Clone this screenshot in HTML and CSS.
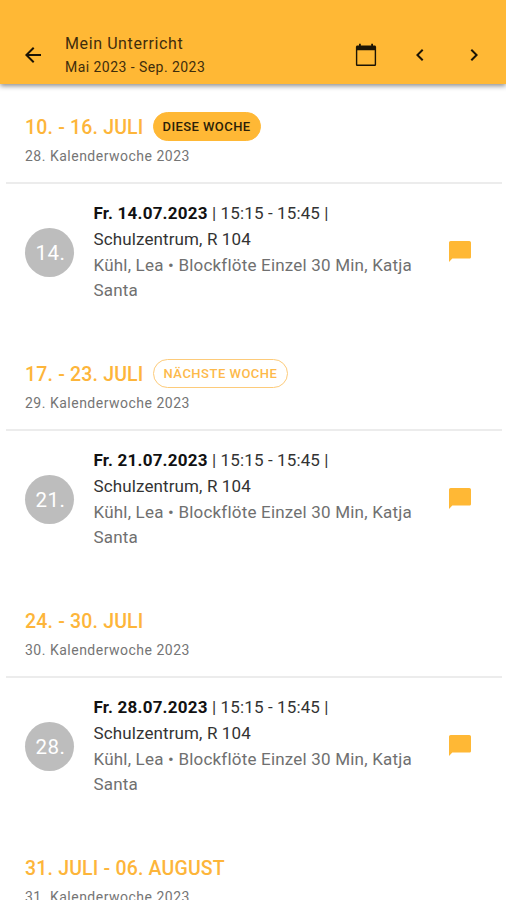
FILE: index.html
```html
<!DOCTYPE html>
<html lang="de">
<head>
    <meta charset="UTF-8">
    <meta name="viewport" content="width=device-width, initial-scale=1.0">
    <title>Mein Unterricht</title>
    <link rel="stylesheet" href="styles.css">
</head>
<body>
    <header class="toolbar">
        <svg class="icon back" viewBox="0 0 24 24"><path d="M20 11H7.83l5.59-5.59L12 4l-8 8 8 8 1.41-1.41L7.83 13H20z"/></svg>
        <div class="titles">
            <div class="title">Mein Unterricht</div>
            <div class="subtitle">Mai 2023 - Sep. 2023</div>
        </div>
        <svg class="icon calendar" viewBox="0 0 24 24"><path d="M20.500 2.500H19V.8h-1.800v1.700H6.800V.8H5v1.700H3.500c-.9 0-1.600.7-1.600 1.600v17.300c0 .9.700 1.600 1.600 1.600h17c.9 0 1.600-.7 1.600-1.600V4.100c0-.9-.7-1.600-1.600-1.600zm.2 19.100H3.300V7.300h17.400z"/></svg>
        <svg class="icon prev" viewBox="0 0 24 24"><path d="M15.410 7.410L14 6l-6 6 6 6 1.410-1.410L10.830 12z"/></svg>
        <svg class="icon next" viewBox="0 0 24 24"><path d="M10 6L8.590 7.410 13.170 12l-4.580 4.590L10 18l6-6z"/></svg>
    </header>

    <main>
        <section class="week">
            <div class="week-header">
                <div class="week-title"><h2>10. - 16. JULI</h2><span class="chip filled">DIESE WOCHE</span></div>
                <div class="week-number">28. Kalenderwoche 2023</div>
            </div>
            <div class="lesson">
                <div class="day">14.</div>
                <div class="details">
                    <div class="when"><b>Fr. 14.07.2023</b> | 15:15 - 15:45 |<br>Schulzentrum, R 104</div>
                    <div class="course">Kühl, Lea • Blockflöte Einzel 30 Min, Katja Santa</div>
                </div>
                <svg class="message" viewBox="2 2 20 20"><path d="M20.500 2H3.500C2.700 2 2 2.700 2 3.500V21l3-3h15.500c.8 0 1.500-.7 1.500-1.500v-13c0-.8-.7-1.500-1.500-1.500z"/></svg>
            </div>
        </section>

        <section class="week">
            <div class="week-header">
                <div class="week-title"><h2>17. - 23. JULI</h2><span class="chip outlined">NÄCHSTE WOCHE</span></div>
                <div class="week-number">29. Kalenderwoche 2023</div>
            </div>
            <div class="lesson">
                <div class="day">21.</div>
                <div class="details">
                    <div class="when"><b>Fr. 21.07.2023</b> | 15:15 - 15:45 |<br>Schulzentrum, R 104</div>
                    <div class="course">Kühl, Lea • Blockflöte Einzel 30 Min, Katja Santa</div>
                </div>
                <svg class="message" viewBox="2 2 20 20"><path d="M20.500 2H3.500C2.700 2 2 2.700 2 3.500V21l3-3h15.500c.8 0 1.500-.7 1.500-1.500v-13c0-.8-.7-1.500-1.500-1.500z"/></svg>
            </div>
        </section>

        <section class="week">
            <div class="week-header">
                <div class="week-title"><h2>24. - 30. JULI</h2></div>
                <div class="week-number">30. Kalenderwoche 2023</div>
            </div>
            <div class="lesson">
                <div class="day">28.</div>
                <div class="details">
                    <div class="when"><b>Fr. 28.07.2023</b> | 15:15 - 15:45 |<br>Schulzentrum, R 104</div>
                    <div class="course">Kühl, Lea • Blockflöte Einzel 30 Min, Katja Santa</div>
                </div>
                <svg class="message" viewBox="2 2 20 20"><path d="M20.500 2H3.500C2.700 2 2 2.700 2 3.500V21l3-3h15.500c.8 0 1.500-.7 1.500-1.500v-13c0-.8-.7-1.500-1.500-1.500z"/></svg>
            </div>
        </section>

        <section class="week">
            <div class="week-header">
                <div class="week-title"><h2>31. JULI - 06. AUGUST</h2></div>
                <div class="week-number">31. Kalenderwoche 2023</div>
            </div>
        </section>
    </main>
</body>
</html>
```
FILE: styles.css
```css
* {
    box-sizing: border-box;
}
body {
    margin: 0;
    height: 900px;
    display: flex;
    flex-direction: column;
    overflow: hidden;
    background-color: #fff;
    font-family: Roboto, sans-serif;
}
.toolbar {
    display: flex;
    align-items: center;
    flex-shrink: 0;
    z-index: 1;
    height: 84px;
    padding: 26px 20px 0 21px;
    background-color: #ffb835;
    box-shadow: 0 2px 5px rgba(0, 0, 0, 0.45);
    color: #3f2d0c;
}
.icon {
    flex-shrink: 0;
    width: 24px;
    height: 24px;
    fill: #1c1405;
}
.titles {
    flex: 1;
    margin-left: 20px;
    padding-top: 1px;
}
.title {
    font-size: 16px;
    line-height: 24px;
    letter-spacing: 0.6px;
}
.subtitle {
    font-size: 14px;
    line-height: 23px;
    letter-spacing: 0.45px;
}
.prev,
.next {
    margin-left: 30px;
}
main {
    flex: 1;
    min-height: 0;
    overflow: hidden;
}
.week {
    height: 247px;
}
.week-header {
    height: 100px;
    margin: 0 4px 0 6px;
    padding: 28px 0 0 19px;
    border-bottom: 2px solid #ececec;
}
.week-title {
    display: flex;
    align-items: center;
    height: 29px;
}
.week-title h2 {
    margin: 0;
    padding-top: 2px;
    font-size: 19.5px;
    font-weight: 500;
    letter-spacing: 0.18px;
    color: #fdb53a;
}
.chip {
    height: 29px;
    margin-left: 9px;
    padding: 0 9px;
    border: 1px solid #ffb835;
    border-radius: 15px;
    font-size: 13px;
    font-weight: 500;
    line-height: 27px;
    letter-spacing: 0.42px;
}
.filled {
    background-color: #ffb835;
    color: #2b1f08;
}
.outlined {
    padding: 0 10px;
    border-color: #fdcb7a;
    color: #fdb94a;
    letter-spacing: 0.5px;
}
.week-number {
    margin-top: 5px;
    font-size: 14px;
    line-height: 20px;
    letter-spacing: 0.5px;
    color: #757575;
}
.lesson {
    display: flex;
    padding: 17px 35px 0 25px;
}
.day {
    width: 49px;
    height: 49px;
    margin-top: 27px;
    padding-left: 2px;
    border-radius: 50%;
    background-color: #bdbdbd;
    color: #fff;
    font-size: 20.5px;
    line-height: 50px;
    letter-spacing: 0.5px;
    text-align: center;
}
.details {
    flex: 1;
    margin: 0 20px 0 19.5px;
    font-size: 17px;
    line-height: 25.75px;
    letter-spacing: 0.2px;
}
.when {
    color: #333;
    letter-spacing: 0.12px;
}
.when b {
    color: #111;
    letter-spacing: 0.22px;
}
.course {
    color: #707070;
}
.message {
    width: 22px;
    height: 22px;
    margin-top: 40px;
    fill: #ffb835;
}
```
